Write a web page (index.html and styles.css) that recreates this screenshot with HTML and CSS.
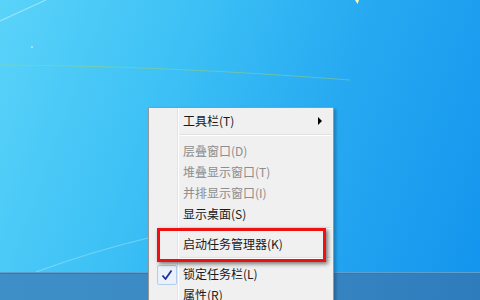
FILE: index.html
```html
<!DOCTYPE html>
<html lang="zh-CN">
<head>
    <meta charset="UTF-8">
    <title>任务栏右键菜单</title>
    <link rel="stylesheet" href="styles.css">
</head>
<body>
    <div class="screen">
        <div class="desktop">
            <svg class="wallpaper" width="480" height="272" viewBox="0 0 480 272">
                <path d="M0 21 L46 0" stroke="#bff0ff" stroke-width="1.2" opacity="0.6" fill="none"/>
                <path d="M0 65 Q170 66 350 80" stroke="#a8d860" stroke-width="1.2" opacity="0.45" fill="none"/>
                <path d="M36 272 Q90 252 148 238" stroke="#a8e6ff" stroke-width="1.2" opacity="0.5" fill="none"/>
                <circle cx="32" cy="47" r="1" fill="#d8f6ff" opacity="0.7"/>
                <path d="M355 0 L359 0 L357.5 4 Z" fill="#fff6b0"/>
            </svg>
        </div>
        <div class="taskbar"></div>

        <!-- 右键菜单 -->
        <div class="context-menu">
            <div class="menu-item">
                <span class="icon"></span><span class="label">工具栏(T)</span><span class="submenu"></span>
            </div>
            <div class="separator"></div>
            <div class="menu-item disabled"><span class="icon"></span><span class="label">层叠窗口(D)</span></div>
            <div class="menu-item disabled"><span class="icon"></span><span class="label">堆叠显示窗口(T)</span></div>
            <div class="menu-item disabled"><span class="icon"></span><span class="label">并排显示窗口(I)</span></div>
            <div class="menu-item"><span class="icon"></span><span class="label">显示桌面(S)</span></div>
            <div class="separator"></div>
            <div class="menu-item"><span class="icon"></span><span class="label">启动任务管理器(K)</span></div>
            <div class="separator"></div>
            <div class="menu-item">
                <span class="icon">
                    <span class="check">
                        <svg width="12" height="12" viewBox="0 0 12 12"><path d="M1.5 6.5 L4.5 10 L10.5 1.5" stroke="#1d2f9a" stroke-width="1.8" fill="none" stroke-linejoin="round"/></svg>
                    </span>
                </span><span class="label">锁定任务栏(L)</span>
            </div>
            <div class="menu-item"><span class="icon"></span><span class="label">属性(R)</span></div>
        </div>

        <div class="highlight-box"></div>
    </div>
</body>
</html>
```

FILE: styles.css
```css
html, body { margin: 0; padding: 0; }
body { font-family: "Noto Sans CJK SC", "Noto Sans", sans-serif; font-size: 12px; overflow: hidden; }

.screen { position: relative; width: 480px; height: 300px; display: flex; flex-direction: column; overflow: hidden; }

.desktop { position: relative; flex: 1; background: linear-gradient(110deg, #5ad3f9 0%, #3cc0f5 35%, #27a9f1 65%, #1495ee 100%); }
.wallpaper { position: absolute; left: 0; top: 0; }

.taskbar { height: 27px; border-top: 1px solid #5f9fcf; background: linear-gradient(to right, #3e8fc8 0%, #3a88c3 50%, #2f7cbd 100%); box-shadow: inset 0 1px 0 #2d7db3; }

/* 右键菜单 */
.context-menu { position: absolute; left: 148px; top: 107px; width: 180px; padding: 2px; border: 1px solid #979797; background-color: #f0f0f0; background-image: linear-gradient(to right, transparent 28px, #e2e3e3 28px, #e2e3e3 29px, #fff 29px, #fff 30px, transparent 30px); box-shadow: 2px 2px 3px rgba(0,0,0,0.25); }
.menu-item { display: flex; align-items: center; height: 21px; color: #1a1a1a; }
.menu-item.disabled { color: #8d8d8d; }
.menu-item .icon { width: 28px; height: 21px; flex: none; display: flex; align-items: center; }
.menu-item .label { flex: 1; padding-left: 4px; line-height: 21px; white-space: nowrap; }
.menu-item .submenu { width: 0; height: 0; margin-right: 9px; border-left: 4px solid #000; border-top: 4px solid transparent; border-bottom: 4px solid transparent; }
.separator { height: 0; margin: 3px 0 4px 29px; border-top: 1px solid #e0e0e0; border-bottom: 1px solid #fff; }

.check { box-sizing: border-box; width: 20px; height: 20px; margin-left: 6px; margin-top: 2px; border: 1px solid #b3cdee; border-radius: 2px; background: #eaf1fb; display: flex; align-items: center; justify-content: center; }

/* 红色标注框 */
.highlight-box { position: absolute; left: 157px; top: 228px; width: 163px; height: 28px; border: 3px solid #ee1111; box-shadow: 2px 2px 4px rgba(0,0,0,0.5); }
```
